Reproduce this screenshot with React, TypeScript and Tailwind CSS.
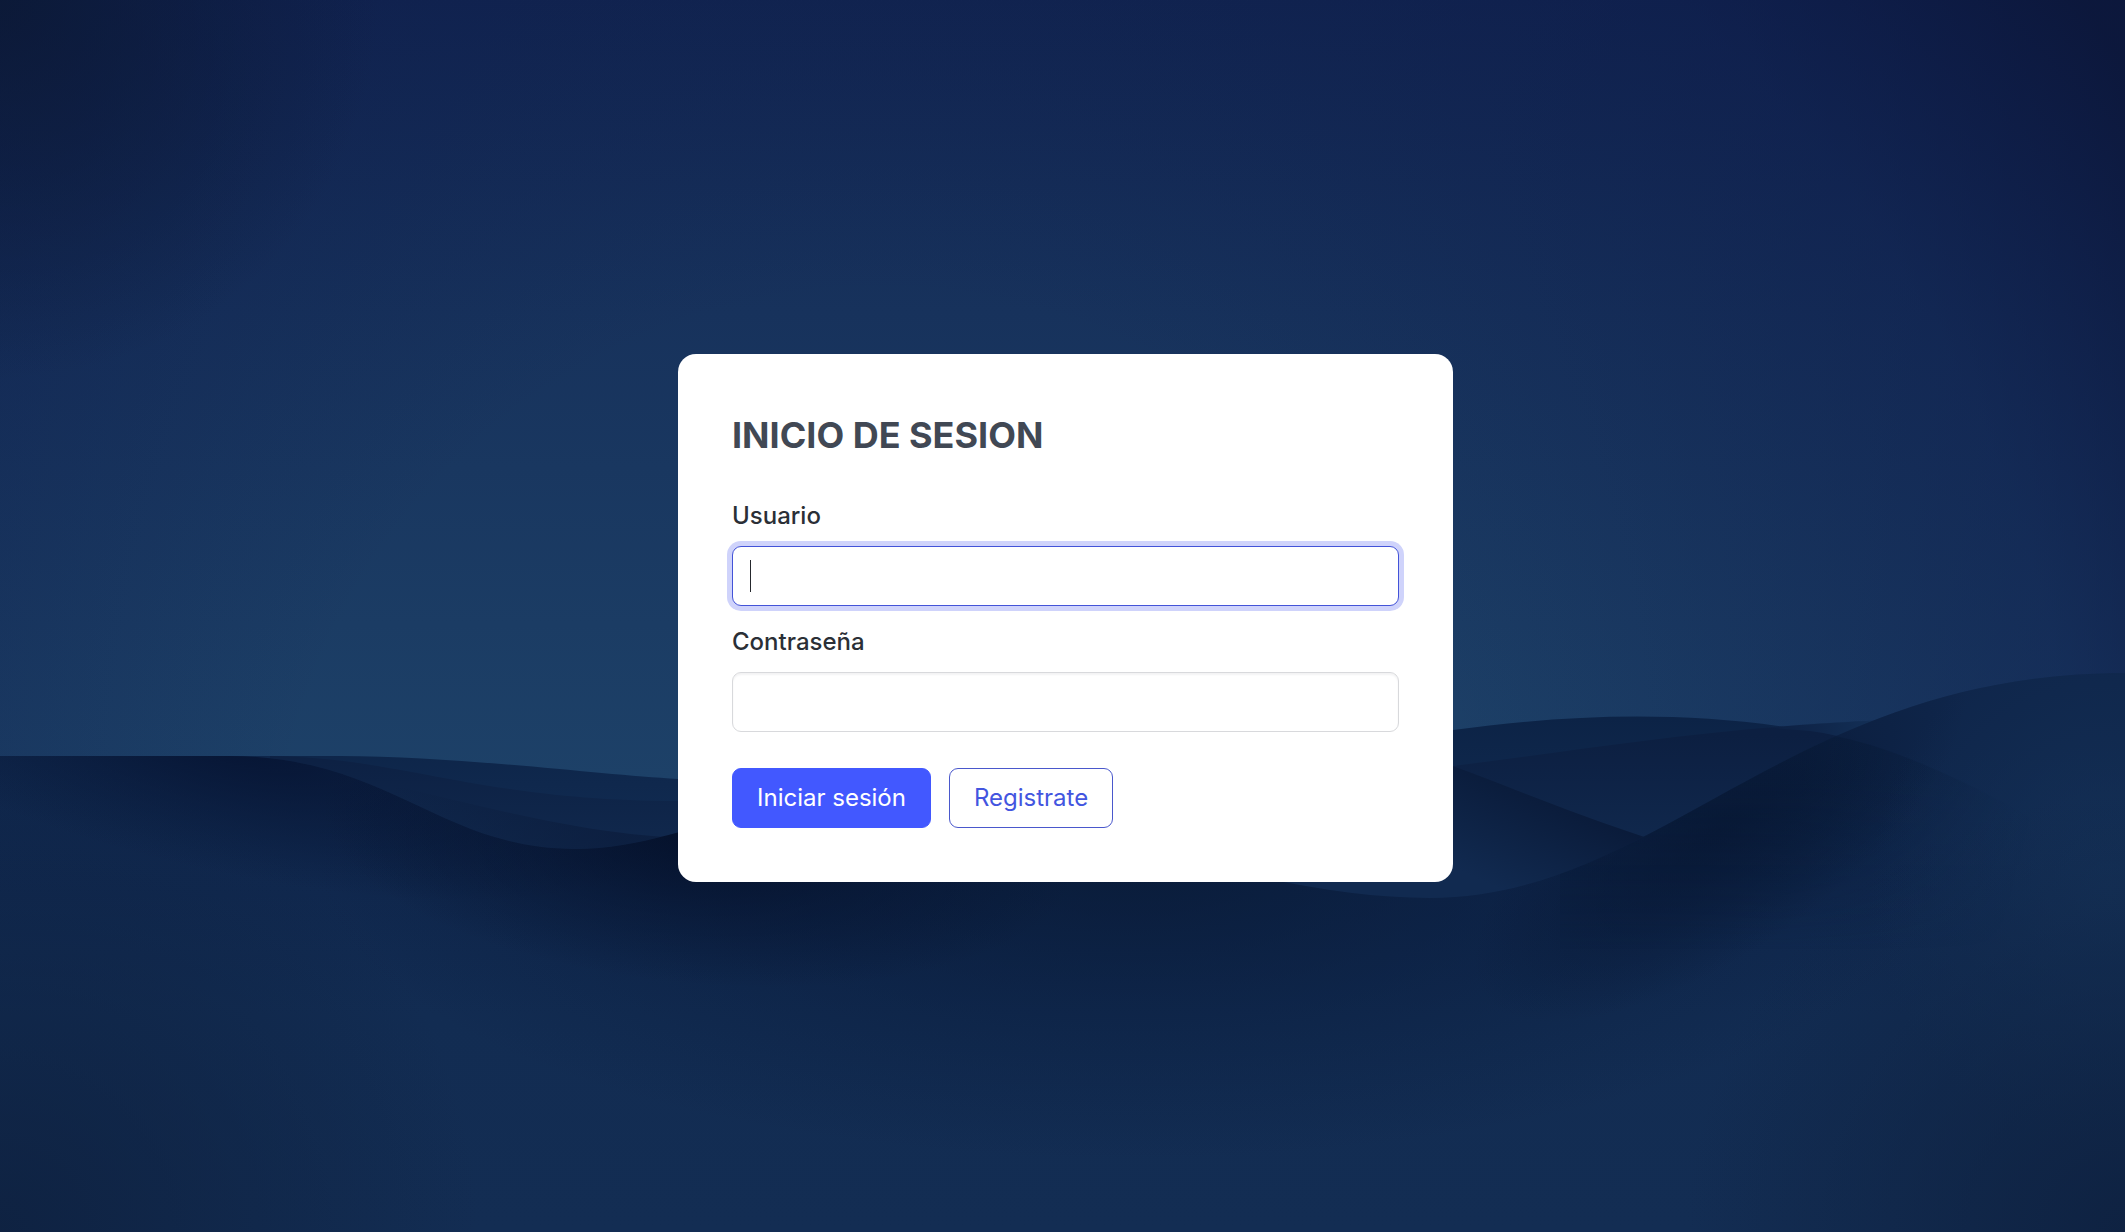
import { useState } from "react";

function Backdrop() {
  return (
    <svg
      className="fixed inset-0 h-full w-full"
      viewBox="0 0 2125 1232"
      preserveAspectRatio="none"
      aria-hidden="true"
    >
      <defs>
        <linearGradient id="sky" x1="0" y1="0" x2="0" y2="780" gradientUnits="userSpaceOnUse">
          <stop offset="0" stopColor="#122652" />
          <stop offset="0.4" stopColor="#17325c" />
          <stop offset="1" stopColor="#1d4168" />
        </linearGradient>
        <radialGradient id="shade" cx="880" cy="900" r="1500" gradientUnits="userSpaceOnUse">
          <stop offset="0.4" stopColor="#0b1746" stopOpacity="0" />
          <stop offset="0.8" stopColor="#0b1746" stopOpacity="0.4" />
          <stop offset="1" stopColor="#0b1538" stopOpacity="0.85" />
        </radialGradient>
        <radialGradient id="topLeft" cx="0" cy="0" r="380" gradientUnits="userSpaceOnUse">
          <stop offset="0" stopColor="#0b1833" stopOpacity="0.8" />
          <stop offset="1" stopColor="#0b1833" stopOpacity="0" />
        </radialGradient>
        <linearGradient id="back" x1="0" y1="718" x2="0" y2="850" gradientUnits="userSpaceOnUse">
          <stop offset="0" stopColor="#0c2346" />
          <stop offset="1" stopColor="#122d54" />
        </linearGradient>
        <linearGradient id="mid" x1="0" y1="735" x2="0" y2="890" gradientUnits="userSpaceOnUse">
          <stop offset="0" stopColor="#0c1f41" />
          <stop offset="1" stopColor="#122c52" />
        </linearGradient>
        <linearGradient id="midEnd" x1="1760" y1="0" x2="1900" y2="0" gradientUnits="userSpaceOnUse">
          <stop offset="0" stopColor="#132f57" stopOpacity="0" />
          <stop offset="1" stopColor="#15345c" />
        </linearGradient>
        <linearGradient id="hill" x1="1530" y1="770" x2="1480" y2="880" gradientUnits="userSpaceOnUse">
          <stop offset="0" stopColor="#091937" />
          <stop offset="1" stopColor="#112a50" />
        </linearGradient>
        <linearGradient id="leftFold" x1="390" y1="0" x2="620" y2="0" gradientUnits="userSpaceOnUse">
          <stop offset="0" stopColor="#0a1a39" stopOpacity="0" />
          <stop offset="1" stopColor="#0a1a39" stopOpacity="0.6" />
        </linearGradient>
        <linearGradient id="front" x1="0" y1="750" x2="0" y2="1232" gradientUnits="userSpaceOnUse">
          <stop offset="0" stopColor="#0f264b" />
          <stop offset="0.3" stopColor="#10284e" />
          <stop offset="0.55" stopColor="#122c52" />
          <stop offset="1" stopColor="#132d53" />
        </linearGradient>
        <radialGradient id="basin" cx="0" cy="0" r="1" gradientUnits="userSpaceOnUse" gradientTransform="translate(1130 860) scale(820 300)">
          <stop offset="0" stopColor="#071731" stopOpacity="0.7" />
          <stop offset="0.5" stopColor="#081a3a" stopOpacity="0.4" />
          <stop offset="1" stopColor="#081a3a" stopOpacity="0" />
        </radialGradient>
        <radialGradient id="trough" cx="0" cy="0" r="1" gradientUnits="userSpaceOnUse" gradientTransform="translate(700 835) rotate(5) scale(380 150)">
          <stop offset="0" stopColor="#040f28" stopOpacity="0.9" />
          <stop offset="0.5" stopColor="#040f28" stopOpacity="0.4" />
          <stop offset="1" stopColor="#040f28" stopOpacity="0" />
        </radialGradient>
        <radialGradient id="ridge" cx="0" cy="0" r="1" gradientUnits="userSpaceOnUse" gradientTransform="translate(240 745) rotate(12) scale(440 130)">
          <stop offset="0" stopColor="#051230" stopOpacity="0.85" />
          <stop offset="0.5" stopColor="#051230" stopOpacity="0.4" />
          <stop offset="1" stopColor="#051230" stopOpacity="0" />
        </radialGradient>
        <radialGradient id="slope" cx="0" cy="0" r="1" gradientUnits="userSpaceOnUse" gradientTransform="translate(1720 830) rotate(-35) scale(290 120)">
          <stop offset="0" stopColor="#06142f" stopOpacity="0.65" />
          <stop offset="0.5" stopColor="#06142f" stopOpacity="0.35" />
          <stop offset="1" stopColor="#06142f" stopOpacity="0" />
        </radialGradient>
        <linearGradient id="fold" x1="1800" y1="800" x2="2080" y2="860" gradientUnits="userSpaceOnUse">
          <stop offset="0" stopColor="#071833" stopOpacity="0.45" />
          <stop offset="0.8" stopColor="#071833" stopOpacity="0" />
        </linearGradient>
        <radialGradient id="glow" cx="0" cy="0" r="1" gradientUnits="userSpaceOnUse" gradientTransform="translate(2110 890) scale(240 260)">
          <stop offset="0" stopColor="#153258" stopOpacity="0.8" />
          <stop offset="1" stopColor="#153258" stopOpacity="0" />
        </radialGradient>
        <radialGradient id="cornerLeft" cx="0" cy="1232" r="480" gradientUnits="userSpaceOnUse">
          <stop offset="0" stopColor="#0e2140" stopOpacity="0.9" />
          <stop offset="1" stopColor="#0e2140" stopOpacity="0" />
        </radialGradient>
        <radialGradient id="cornerRight" cx="2125" cy="1232" r="440" gradientUnits="userSpaceOnUse">
          <stop offset="0" stopColor="#0e2140" stopOpacity="0.9" />
          <stop offset="1" stopColor="#0e2140" stopOpacity="0" />
        </radialGradient>
        <clipPath id="frontClip">
          <path d="M0 756 L230 756 C390 757 440 849 575 849 C660 849 720 810 830 800 C1050 800 1240 898 1430 898 C1660 898 1790 673 2125 673 V1232 H0 Z" />
        </clipPath>
      </defs>
      <rect width="2125" height="1232" fill="url(#sky)" />
      <rect width="2125" height="1232" fill="url(#shade)" />
      <rect width="2125" height="1232" fill="url(#topLeft)" />
      <path d="M0 756 L340 756 C470 757 600 775 678 779 C1000 810 1250 760 1453 730 C1570 714 1690 710 1810 731 C1870 741 1970 765 2125 840 V1232 H0 Z" fill="url(#back)" />
      <path d="M270 756 C400 757 480 801 678 801 C950 810 1200 800 1453 766 C1600 748 1760 719 1960 719 V1000 H270 Z" fill="url(#mid)" />
      <path d="M1760 727 C1820 723 1880 719 1960 719 V790 C1900 754 1860 738 1810 731 Z" fill="url(#midEnd)" />
      <path d="M390 785 C480 805 570 832 678 838 V900 H390 Z" fill="url(#leftFold)" />
      <path d="M1300 740 C1420 735 1480 785 1660 842 L1660 900 H1300 Z" fill="url(#hill)" />
      <g clipPath="url(#frontClip)">
        <rect y="660" width="2125" height="572" fill="url(#front)" />
        <rect y="660" width="2125" height="572" fill="url(#basin)" />
        <rect y="660" width="2125" height="572" fill="url(#ridge)" />
        <rect y="660" width="2125" height="572" fill="url(#trough)" />
        <rect y="660" width="2125" height="572" fill="url(#slope)" />
        <path d="M1560 735 H1830 C1900 748 1990 790 2100 860 V960 H1560 Z" fill="url(#fold)" mask="url(#foldMask)" />
        <rect y="660" width="2125" height="572" fill="url(#glow)" />
        <rect y="660" width="2125" height="572" fill="url(#cornerLeft)" />
        <rect y="660" width="2125" height="572" fill="url(#cornerRight)" />
      </g>
      <defs>
        <linearGradient id="foldFade" x1="0" y1="780" x2="0" y2="950" gradientUnits="userSpaceOnUse">
          <stop offset="0" stopColor="#fff" />
          <stop offset="1" stopColor="#000" />
        </linearGradient>
        <mask id="foldMask" maskUnits="userSpaceOnUse" x="1500" y="660" width="625" height="400">
          <rect x="1500" y="660" width="625" height="400" fill="url(#foldFade)" />
        </mask>
      </defs>
    </svg>
  );
}

const field =
  "block h-[60px] w-full rounded-[9px] border bg-white px-[17px] text-2xl text-[#25282d] outline-none";

export default function App() {
  const [user, setUser] = useState("");
  const [password, setPassword] = useState("");

  return (
    <div className="flex min-h-screen items-center justify-center bg-[#12264f] pt-1 pl-1.5 font-[Inter,sans-serif]">
      <Backdrop />
      <main className="relative w-full max-w-[775px] rounded-[18px] bg-white p-[54px]">
        <h1 className="text-4xl leading-[54px] font-bold text-[#414854]">INICIO DE SESION</h1>
        <form className="mt-9" onSubmit={(e) => e.preventDefault()}>
          <label htmlFor="user" className="block text-2xl leading-9 font-medium text-[#2b2f36]">
            Usuario
          </label>
          <div className="relative mt-3">
            <input
              id="user"
              type="text"
              value={user}
              onChange={(e) => setUser(e.target.value)}
              className={`${field} border-[#4353d8] caret-transparent ring-[5px] ring-[#cfd3fb]`}
            />
            {user === "" && (
              <span className="pointer-events-none absolute top-3.5 left-[18px] h-8 w-px bg-[#25282d]" />
            )}
          </div>
          <label
            htmlFor="password"
            className="mt-[18px] block text-2xl leading-9 font-medium text-[#2b2f36]"
          >
            Contraseña
          </label>
          <input
            id="password"
            type="password"
            value={password}
            onChange={(e) => setPassword(e.target.value)}
            className={`${field} mt-3 border-[#d8d9dc] shadow-[inset_0_2px_2px_#f3f3f4]`}
          />
          <div className="mt-9 flex gap-[18px]">
            <button
              type="submit"
              className="h-[60px] rounded-[9px] border border-[#4258ff] bg-[#4258ff] px-6 text-2xl text-white"
            >
              Iniciar sesión
            </button>
            <button
              type="button"
              className="h-[60px] rounded-[9px] border border-[#4a58cc] bg-white px-6 text-2xl text-[#4355e0]"
            >
              Registrate
            </button>
          </div>
        </form>
      </main>
    </div>
  );
}
